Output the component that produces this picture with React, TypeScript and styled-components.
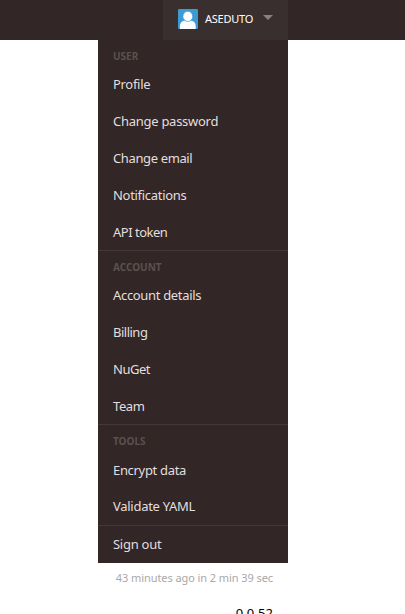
import React from 'react';
import styled, { createGlobalStyle } from 'styled-components';

const GlobalStyle = createGlobalStyle`
  * { box-sizing: border-box; }
  body {
    margin: 0;
    background: #fff;
    font-family: "Noto Sans", "Open Sans", sans-serif;
  }
`;

const Page = styled.div`
  height: 614px;
  overflow: hidden;
`;

const TopBar = styled.header`
  height: 40px;
  padding-right: 117px;
  display: flex;
  justify-content: flex-end;
  background: #322626;
`;

const UserButton = styled.div`
  width: 125px;
  padding: 0 15px;
  display: flex;
  align-items: center;
  background: #3a2f2f;
  color: #fff;
`;

const Avatar = styled.svg`
  width: 20px;
  height: 20px;
  margin-top: -2px;
  flex: none;
`;

const UserName = styled.span`
  width: 48px;
  margin: -2px 10px 0 7px;
  font-size: 11px;
  line-height: 16px;
  letter-spacing: -0.25px;
  white-space: nowrap;
`;

const Caret = styled.svg`
  width: 10px;
  height: 5px;
  margin-top: -5px;
  flex: none;
`;

const Menu = styled.nav`
  width: 190px;
  height: 523px;
  margin-left: 98px;
  background: #322626;
`;

const Section = styled.section<{ $height: number }>`
  height: ${(p) => p.$height}px;
  border-bottom: 1px solid #433737;
  &:last-child { border-bottom: 0; }
`;

const Heading = styled.div`
  height: 26px;
  padding: 3px 15px 0;
  font-size: 10px;
  font-weight: 700;
  line-height: 26px;
  color: #5c5050;
`;

const Item = styled.div<{ $spacing: number; $shift?: number }>`
  height: 37px;
  padding: ${(p) => p.$shift ?? 0}px 15px 0;
  font-size: 13px;
  line-height: 37px;
  letter-spacing: ${(p) => p.$spacing}px;
  color: #e2dfdf;
  white-space: nowrap;
`;

const BuildInfo = styled.div`
  width: 405px;
  padding: 7px 132px 0 0;
  font-size: 11px;
  line-height: 16px;
  letter-spacing: -0.08px;
  text-align: right;
  color: #a9a9a9;
`;

const Version = styled.div`
  padding: 18px 132px 0 0;
  font-size: 13px;
  line-height: 18px;
  letter-spacing: 0.1px;
  text-align: right;
  color: #000;
`;

type Entry = { label: string; spacing: number; shift?: number };
type Group = { title?: string; height: number; items: Entry[] };

const groups: Group[] = [
  {
    title: 'USER',
    height: 211,
    items: [
      { label: 'Profile', spacing: -0.3 },
      { label: 'Change password', spacing: -0.27 },
      { label: 'Change email', spacing: -0.37 },
      { label: 'Notifications', spacing: -0.3 },
      { label: 'API token', spacing: -0.5 },
    ],
  },
  {
    title: 'ACCOUNT',
    height: 174,
    items: [
      { label: 'Account details', spacing: -0.33 },
      { label: 'Billing', spacing: -0.5 },
      { label: 'NuGet', spacing: -0.5 },
      { label: 'Team', spacing: -0.4 },
    ],
  },
  {
    title: 'TOOLS',
    height: 101,
    items: [
      { label: 'Encrypt data', spacing: -0.32, shift: 1 },
      { label: 'Validate YAML', spacing: -0.28 },
    ],
  },
  { height: 37, items: [{ label: 'Sign out', spacing: -0.27 }] },
];

export default function App() {
  return (
    <Page>
      <GlobalStyle />
      <TopBar>
        <UserButton>
          <Avatar viewBox="0 0 20 20">
            <rect width="20" height="20" rx="1.2" fill="#3d9bd3" />
            <path d="M1.9 20v-2.6c0-3.2 1.6-5.4 4.3-5.6h7.2c2.7.2 4.3 2.4 4.3 5.6V20z" fill="#fff" />
            <ellipse cx="9.8" cy="7.4" rx="4.9" ry="5.1" fill="#fff" stroke="#3d9bd3" strokeWidth="0.7" />
          </Avatar>
          <UserName>ASEDUTO</UserName>
          <Caret viewBox="0 0 10 5">
            <path d="M0 0h10L5 5z" fill="#8a8080" />
          </Caret>
        </UserButton>
      </TopBar>
      <Menu>
        {groups.map((group, index) => (
          <Section key={index} $height={group.height}>
            {group.title && <Heading>{group.title}</Heading>}
            {group.items.map((item) => (
              <Item key={item.label} $spacing={item.spacing} $shift={item.shift}>
                {item.label}
              </Item>
            ))}
          </Section>
        ))}
      </Menu>
      <BuildInfo>43 minutes ago in 2 min 39 sec</BuildInfo>
      <Version>0.0.52</Version>
    </Page>
  );
}
